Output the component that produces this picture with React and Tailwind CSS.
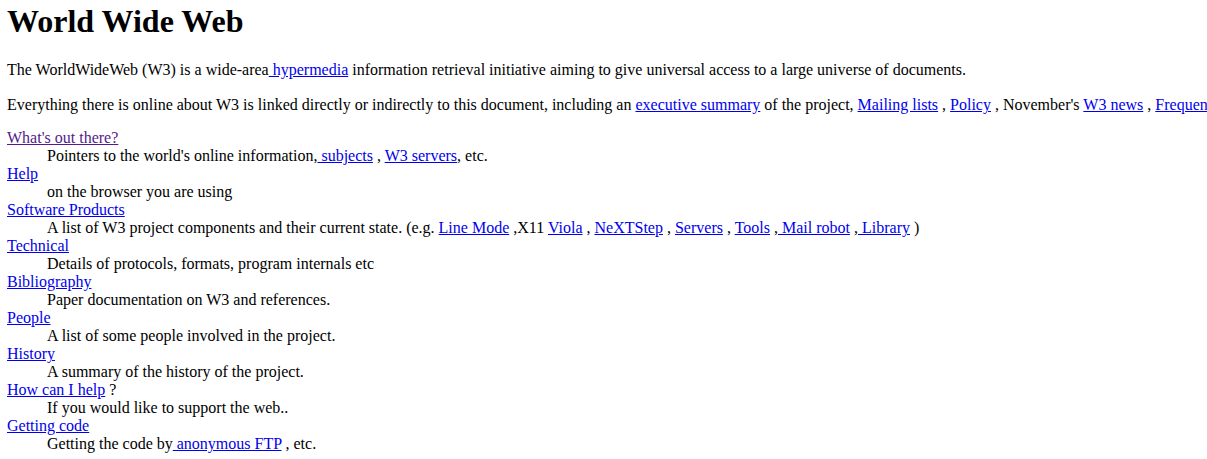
import React from 'react'

const A = ({ children, visited }) => (
    <a href="#" className={visited ? "text-[#551a8b] underline" : "text-[#0000ee] underline"}>
        {children}
    </a>
)

const entries = [
    {
        title: "What's out there?",
        visited: true,
        desc: <>Pointers to the world's online information,<A> subjects</A> , <A>W3 servers</A>, etc.</>
    },
    { title: "Help", desc: <>on the browser you are using</> },
    {
        title: "Software Products",
        desc: <>A list of W3 project components and their current state. (e.g. <A>Line Mode</A> ,X11 <A>Viola</A> , <A>NeXTStep</A> , <A>Servers</A> , <A>Tools</A> ,<A> Mail robot</A> ,<A> Library</A> )</>
    },
    { title: "Technical", desc: <>Details of protocols, formats, program internals etc</> },
    { title: "Bibliography", desc: <>Paper documentation on W3 and references.</> },
    { title: "People", desc: <>A list of some people involved in the project.</> },
    { title: "History", desc: <>A summary of the history of the project.</> },
    { title: "How can I help", after: " ?", desc: <>If you would like to support the web..</> },
    { title: "Getting code", desc: <>Getting the code by<A> anonymous FTP</A> , etc.</> },
]

const App = () => {
    return (
        <div className="w-[1207px] h-[459px] overflow-hidden bg-white text-black font-['Liberation_Serif','Times_New_Roman',serif] text-[16px] leading-[18px] px-[7px] whitespace-nowrap">
            <h1 className="pt-[3px] text-[32px] leading-[37px] font-bold">World Wide Web</h1>
            <p className="mt-[21px]">
                The WorldWideWeb (W3) is a wide-area<A> hypermedia</A> information retrieval initiative aiming to give universal access to a large universe of documents.
            </p>
            <p className="mt-[17px]">
                Everything there is online about W3 is linked directly or indirectly to this document, including an <A>executive summary</A> of the project, <A>Mailing lists</A> , <A>Policy</A> , November's <A>W3 news</A> , <A>Frequently Asked Questions</A> .
            </p>
            <dl className="mt-[15px]">
                {entries.map((e) => (
                    <React.Fragment key={e.title}>
                        <dt>
                            <A visited={e.visited}>{e.title}</A>{e.after}
                        </dt>
                        <dd className="ml-10">{e.desc}</dd>
                    </React.Fragment>
                ))}
            </dl>
        </div>
    )
}

export default App;
